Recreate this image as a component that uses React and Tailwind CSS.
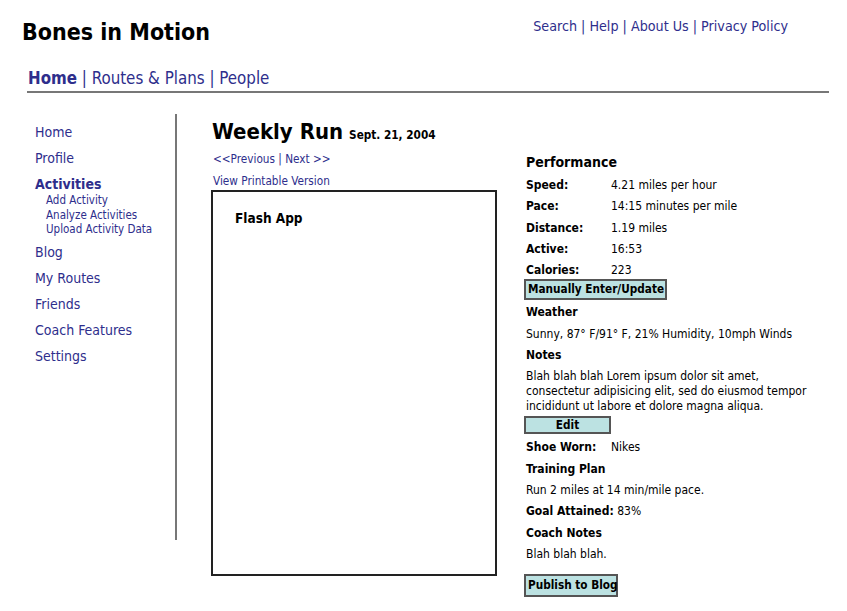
import React from "react";

const link = "text-[#2e2e8c]";

const sideItems = [
  { label: "Home" },
  { label: "Profile" },
  { label: "Activities", bold: true, subs: ["Add Activity", "Analyze Activities", "Upload Activity Data"] },
  { label: "Blog" },
  { label: "My Routes" },
  { label: "Friends" },
  { label: "Coach Features" },
  { label: "Settings" },
];

const stats = [
  ["Speed:", "4.21 miles per hour"],
  ["Pace:", "14:15 minutes per mile"],
  ["Distance:", "1.19 miles"],
  ["Active:", "16:53"],
  ["Calories:", "223"],
];

function Btn({ children, className = "" }) {
  return (
    <div
      className={`-ml-[2px] flex items-center whitespace-nowrap border-2 border-[#555] bg-[#bce2e2] text-[11.7px] font-bold text-black leading-none ${className}`}
    >
      {children}
    </div>
  );
}

export default function App() {
  return (
    <div
      className="w-[847px] h-[611px] bg-white text-black overflow-hidden"
      style={{ fontFamily: '"DejaVu Sans Condensed", "DejaVu Sans", Verdana, sans-serif' }}
    >
      {/* header */}
      <div className="flex justify-between">
        <h1 className="pl-[22px] pt-[17px] text-[23px] font-bold leading-[30px]">
          Bones in Motion
        </h1>
        <div className={`pr-[59px] pt-[16px] text-[14.2px] leading-[20px] ${link}`}>
          Search | Help | About Us | Privacy Policy
        </div>
      </div>

      <div className={`ml-[28px] mt-[20px] text-[16.8px] leading-[22px] ${link}`}>
        <span className="font-bold">Home</span> | Routes &amp; Plans | People
      </div>
      <div className="ml-[27px] mt-[2px] w-[802px] h-[2px] bg-[#777]" />

      <div className="flex mt-[21px]">
        {/* sidebar */}
        <div className="w-[177px] h-[426px] border-r-2 border-[#777] pl-[35px] pt-[10px]">
          {sideItems.map((it) => (
            <div key={it.label} className="mb-[9px]">
              <div className={`text-[14px] leading-[17px] ${link} ${it.bold ? "font-bold" : ""}`}>
                {it.label}
              </div>
              {it.subs && (
                <div className="pl-[11px] -mb-[2px]">
                  {it.subs.map((s) => (
                    <div key={s} className={`text-[11.5px] leading-[14.5px] ${link}`}>
                      {s}
                    </div>
                  ))}
                </div>
              )}
            </div>
          ))}
        </div>

        {/* main */}
        <div className="ml-[34px] w-[286px]">
          <div className="pt-[4px] flex items-baseline gap-[6px] pl-[1px] font-bold">
            <span className="text-[22px] leading-[28px]">Weekly Run</span>
            <span className="text-[11.7px]">Sept. 21, 2004</span>
          </div>
          <div className={`mt-[5px] text-[11.7px] leading-[16px] ${link} ml-[2px]`}>
            &lt;&lt;Previous | Next &gt;&gt;
          </div>
          <div className={`mt-[6px] text-[11.7px] leading-[16px] ${link} ml-[2px]`}>
            View Printable Version
          </div>
          <div className="mt-[1px] h-[386px] w-[286px] border-2 border-[#222] pl-[22px] pt-[16px]">
            <div className="text-[13.5px] font-bold">Flash App</div>
          </div>
        </div>

        {/* right */}
        <div className="ml-[29px] w-[310px] pt-[37px] text-[12px] leading-[21.3px]">
          <div className="text-[14px] font-bold leading-[22px]">Performance</div>
          <div className="pt-[2px]">
            {stats.map(([k, v]) => (
              <div key={k} className="flex">
                <span className="w-[85px] font-bold">{k}</span>
                <span>{v}</span>
              </div>
            ))}
          </div>
          <Btn className="-mt-[2px] w-[143px] h-[21px] px-[2px]">Manually Enter/Update</Btn>
          <div className="mt-[2px] font-bold">Weather</div>
          <div>Sunny, 87° F/91° F, 21% Humidity, 10mph Winds</div>
          <div className="font-bold">Notes</div>
          <div className="leading-[15px] pt-[3px]">
            Blah blah blah Lorem ipsum dolor sit amet,
            <br />
            consectetur adipisicing elit, sed do eiusmod tempor
            <br />
            incididunt ut labore et dolore magna aliqua.
          </div>
          <Btn className="mt-[2px] w-[87px] h-[18px] justify-center">Edit</Btn>
          <div className="flex mt-[3px]">
            <span className="w-[85px] font-bold">Shoe Worn:</span>
            <span>Nikes</span>
          </div>
          <div className="font-bold">Training Plan</div>
          <div>Run 2 miles at 14 min/mile pace.</div>
          <div>
            <span className="font-bold">Goal Attained:</span> 83%
          </div>
          <div className="font-bold">Coach Notes</div>
          <div>Blah blah blah.</div>
          <Btn className="mt-[9px] w-[94px] h-[23px] px-[2px]">Publish to Blog</Btn>
        </div>
      </div>
    </div>
  );
}
